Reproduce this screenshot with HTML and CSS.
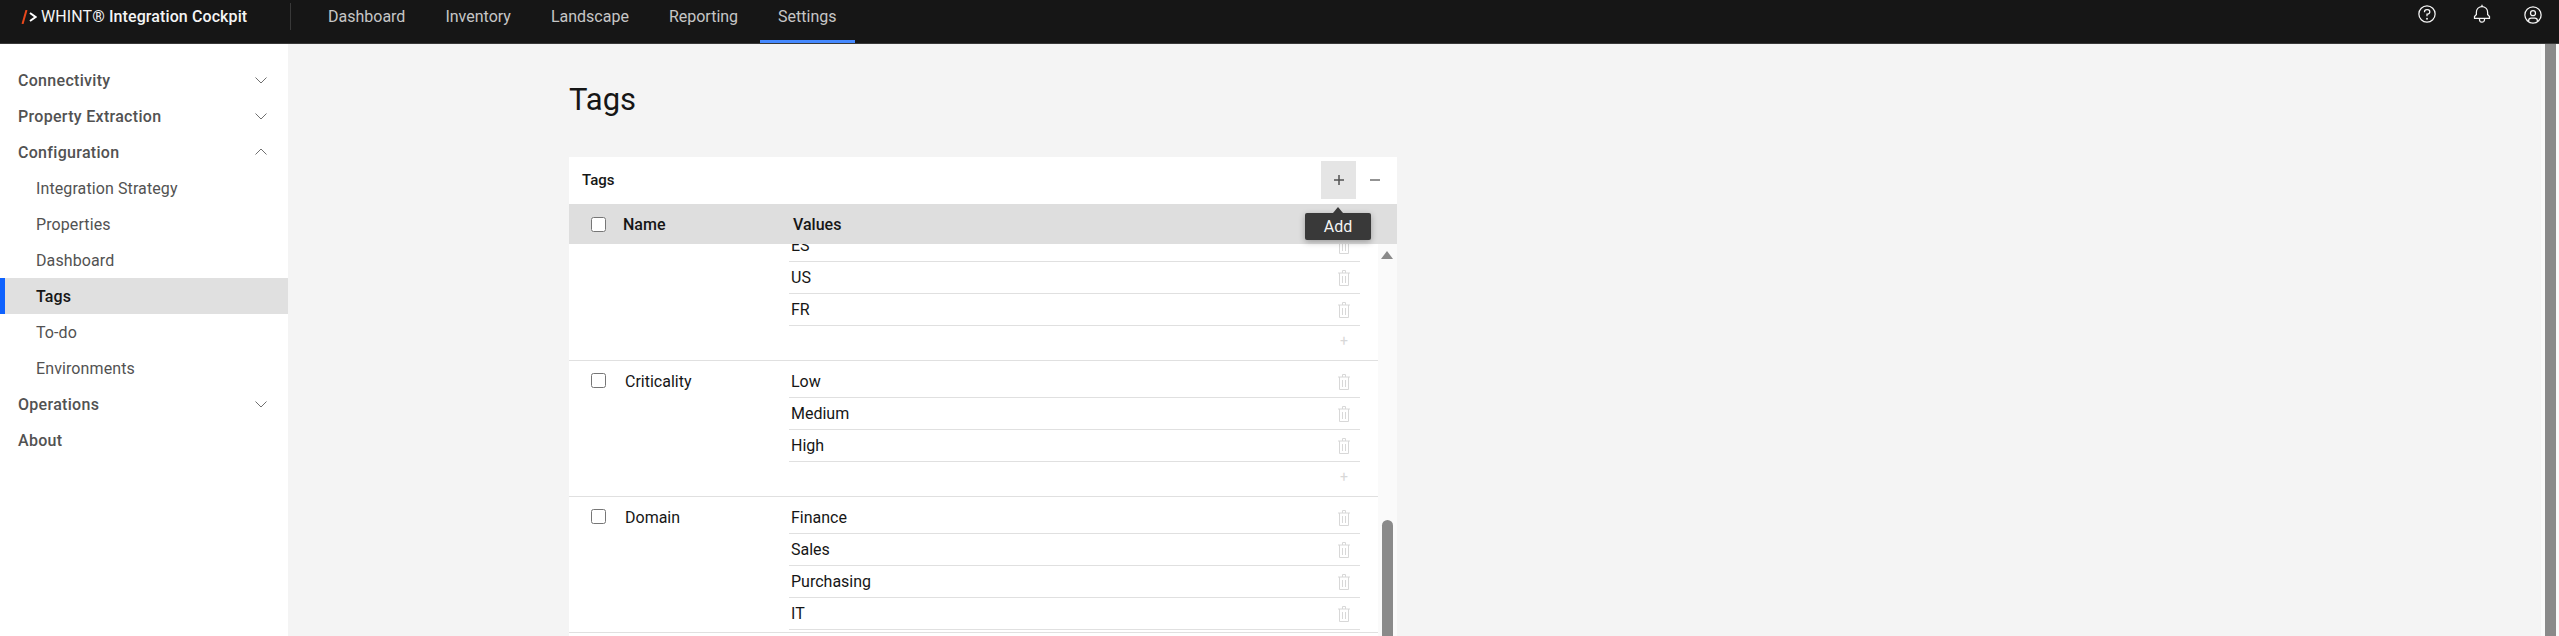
FILE: index.html
```html
<!DOCTYPE html>
<html lang="en">
<head>
    <meta charset="UTF-8">
    <meta name="viewport" content="width=device-width, initial-scale=1.0">
    <title>Tags</title>
    <link rel="stylesheet" href="styles.css">
</head>
<body>
    <svg class="sprites" width="0" height="0">
        <symbol id="trash" viewBox="0 0 12 16">
            <path d="M0 3h12M4.500 3V.5h3V3M1.500 3v12.500h9V3M4.500 6v7M7.500 6v7" fill="none" stroke="currentColor"/>
        </symbol>
        <symbol id="chevron" viewBox="0 0 12 12">
            <path d="M.5 3.500 6 9l5.500-5.500" fill="none" stroke="currentColor"/>
        </symbol>
    </svg>

    <header class="topbar">
        <div class="brand">
            <svg class="brand-logo" viewBox="0 0 16 14">
                <path d="M5.500 0 1.500 14" fill="none" stroke="#e8481c" stroke-width="2"/>
                <path d="M9 3l5.500 4L9 11" fill="none" stroke="#fff" stroke-width="2"/>
            </svg>
            <span class="brand-name">WHINT® <b>Integration Cockpit</b></span>
        </div>
        <nav class="tabs">
            <a class="tab">Dashboard</a>
            <a class="tab">Inventory</a>
            <a class="tab">Landscape</a>
            <a class="tab">Reporting</a>
            <a class="tab active">Settings</a>
        </nav>
        <div class="top-icons">
            <svg class="top-icon" viewBox="0 0 32 32" fill="currentColor">
                <path d="M16,2A14,14,0,1,0,30,16,14,14,0,0,0,16,2Zm0,26A12,12,0,1,1,28,16,12,12,0,0,1,16,28Z"/>
                <circle cx="16" cy="23.500" r="1.500"/>
                <path d="M17,8H15.500A4.490,4.490,0,0,0,11,12.500V13h2v-.5A2.500,2.500,0,0,1,15.500,10H17a2.500,2.500,0,0,1,0,5H15v4.500h2V17a4.500,4.500,0,0,0,0-9Z"/>
            </svg>
            <svg class="top-icon bell" viewBox="0 0 32 32" fill="currentColor">
                <path d="M28.7071,19.293,26,16.5859V13a10.0136,10.0136,0,0,0-9-9.9492V1H15V3.0508A10.0136,10.0136,0,0,0,6,13v3.5859L3.2929,19.293A1,1,0,0,0,3,20v3a1,1,0,0,0,1,1h7v.7768a5.152,5.152,0,0,0,4.500,5.1987A5.0057,5.0057,0,0,0,21,25V24h7a1,1,0,0,0,1-1V20A1,1,0,0,0,28.7071,19.293ZM19,25a3,3,0,0,1-6,0V24h6Zm8-3H5V20.4141L7.707,17.707A1,1,0,0,0,8,17V13a8,8,0,0,1,16,0v4a1,1,0,0,0,.293.707L27,20.4141Z"/>
            </svg>
            <svg class="top-icon user" viewBox="0 0 32 32" fill="currentColor">
                <path d="M16,8a5,5,0,1,0,5,5A5,5,0,0,0,16,8Zm0,8a3,3,0,1,1,3-3A3.0034,3.0034,0,0,1,16,16Z"/>
                <path d="M16,2A14,14,0,1,0,30,16,14.0158,14.0158,0,0,0,16,2ZM10,26.3765V25a3.0033,3.0033,0,0,1,3-3h6a3.0033,3.0033,0,0,1,3,3v1.3765a11.8989,11.8989,0,0,1-12,0Zm13.9925-1.4507A5.0016,5.0016,0,0,0,19,20H13a5.0016,5.0016,0,0,0-4.9925,4.9258,12,12,0,1,1,15.985,0Z"/>
            </svg>
        </div>
    </header>

    <div class="layout">
        <aside class="sidebar">
            <a class="side-item parent">Connectivity <svg class="chevron"><use href="#chevron"/></svg></a>
            <a class="side-item parent">Property Extraction <svg class="chevron"><use href="#chevron"/></svg></a>
            <a class="side-item parent">Configuration <svg class="chevron open"><use href="#chevron"/></svg></a>
            <a class="side-item child">Integration Strategy</a>
            <a class="side-item child">Properties</a>
            <a class="side-item child">Dashboard</a>
            <a class="side-item child current">Tags</a>
            <a class="side-item child">To-do</a>
            <a class="side-item child">Environments</a>
            <a class="side-item parent">Operations <svg class="chevron"><use href="#chevron"/></svg></a>
            <a class="side-item parent">About</a>
        </aside>

        <main class="content">
            <h1 class="page-title">Tags</h1>
            <section class="card">
                <div class="card-head">
                    <span class="card-title">Tags</span>
                    <button class="tool-btn hovered">
                        <svg class="tool-icon" viewBox="0 0 10 10"><path d="M0 5h10M5 0v10" stroke="currentColor" stroke-width="1.500"/></svg>
                        <span class="tooltip">Add</span>
                    </button>
                    <button class="tool-btn">
                        <svg class="tool-icon" viewBox="0 0 10 10"><path d="M0 5h10" stroke="currentColor" stroke-width="1.500"/></svg>
                    </button>
                </div>
                <div class="thead">
                    <input type="checkbox" class="check">
                    <span class="th-name">Name</span>
                    <span class="th-values">Values</span>
                </div>
                <div class="tbody">
                    <div class="groups">
                        <div class="group">
                            <div class="group-name"></div>
                            <div class="values">
                                <div class="value">ES <svg class="trash"><use href="#trash"/></svg></div>
                                <div class="value">US <svg class="trash"><use href="#trash"/></svg></div>
                                <div class="value">FR <svg class="trash"><use href="#trash"/></svg></div>
                                <div class="value-add">+</div>
                            </div>
                        </div>
                        <div class="group">
                            <div class="group-name"><input type="checkbox" class="check"><span>Criticality</span></div>
                            <div class="values">
                                <div class="value">Low <svg class="trash"><use href="#trash"/></svg></div>
                                <div class="value">Medium <svg class="trash"><use href="#trash"/></svg></div>
                                <div class="value">High <svg class="trash"><use href="#trash"/></svg></div>
                                <div class="value-add">+</div>
                            </div>
                        </div>
                        <div class="group">
                            <div class="group-name"><input type="checkbox" class="check"><span>Domain</span></div>
                            <div class="values">
                                <div class="value">Finance <svg class="trash"><use href="#trash"/></svg></div>
                                <div class="value">Sales <svg class="trash"><use href="#trash"/></svg></div>
                                <div class="value">Purchasing <svg class="trash"><use href="#trash"/></svg></div>
                                <div class="value">IT <svg class="trash"><use href="#trash"/></svg></div>
                            </div>
                        </div>
                    </div>
                    <div class="inner-scroll">
                        <span class="scroll-arrow"></span>
                        <span class="scroll-thumb"></span>
                    </div>
                </div>
            </section>
        </main>

        <div class="page-scroll"><span class="page-thumb"></span></div>
    </div>
</body>
</html>
```

FILE: styles.css
```css
* {
    box-sizing: border-box;
}
html, body {
    height: 100%;
}
body {
    margin: 0;
    font-family: Roboto, "Open Sans", Arial, sans-serif;
    font-size: 16px;
    color: #161616;
    background: #f4f4f4;
    overflow: hidden;
    display: flex;
    flex-direction: column;
}
.sprites {
    position: absolute;
}

/* top bar */
.topbar {
    flex: none;
    height: 44px;
    background: #161616;
    border-bottom: 1px solid #393939;
    display: flex;
    color: #c6c6c6;
}
.brand {
    width: 291px;
    height: 43px;
    padding: 0 0 10px 21px;
    display: flex;
    align-items: center;
    gap: 4px;
    color: #f4f4f4;
    position: relative;
}
.brand::after {
    content: '';
    position: absolute;
    right: 0;
    top: 3px;
    height: 27px;
    width: 1px;
    background: #393939;
}
.brand-logo {
    width: 16px;
    height: 14px;
    flex: none;
}
.brand-name {
    font-size: 16px;
    letter-spacing: 0.1px;
}
.brand-name b {
    font-weight: 500;
}
.tabs {
    display: flex;
    gap: 4px;
    margin-left: 19px;
}
.tab {
    padding: 0 18px;
    height: 43px;
    line-height: 33px;
    border-bottom: 3px solid transparent;
}
.tab.active {
    border-bottom-color: #4589ff;
}
.top-icons {
    margin-left: auto;
    display: flex;
    gap: 35px;
    padding: 4px 16px 0 0;
    color: #f4f4f4;
}
.top-icon {
    width: 20px;
    height: 20px;
}
.bell {
    margin-right: -4px;
}
.user {
    margin-top: 1px;
}

/* sidebar */
.layout {
    flex: 1;
    display: flex;
    min-height: 0;
}
.sidebar {
    width: 288px;
    flex: none;
    background: #fff;
    padding-top: 18px;
    color: #525252;
}
.side-item {
    height: 36px;
    display: flex;
    align-items: center;
    justify-content: space-between;
}
.parent {
    padding: 0 21px 0 18px;
    font-weight: 500;
    letter-spacing: 0.3px;
}
.child {
    padding-left: 36px;
    letter-spacing: 0.1px;
}
.current {
    background: #e0e0e0;
    color: #161616;
    font-weight: 500;
    border-left: 5px solid #0f62fe;
    padding-left: 31px;
}
.chevron {
    width: 12px;
    height: 12px;
    color: #6f6f6f;
}
.chevron.open {
    transform: rotate(180deg);
}

/* main area */
.content {
    flex: 1;
    min-width: 0;
    padding-left: 281px;
}
.page-title {
    margin: 0;
    height: 113px;
    padding-top: 36px;
    font-size: 31px;
    line-height: 40px;
    font-weight: 400;
}
.card {
    width: 828px;
    background: #fff;
    height: 479px;
    display: flex;
    flex-direction: column;
}
.card-head {
    flex: none;
    height: 47px;
    padding: 4px 5px 5px 13px;
    display: flex;
    align-items: center;
}
.card-title {
    flex: 1;
    font-size: 15px;
    font-weight: 500;
}
.tool-btn {
    width: 35px;
    height: 38px;
    padding: 0;
    border: none;
    background: none;
    color: #6f6f6f;
    font-family: inherit;
    position: relative;
    display: flex;
    align-items: center;
    justify-content: center;
}
.tool-btn.hovered {
    background: #e5e5e5;
    color: #525252;
    margin-right: 1px;
}
.tool-icon {
    width: 10px;
    height: 10px;
}
.tooltip {
    position: absolute;
    z-index: 2;
    left: -16px;
    top: 52px;
    width: 66px;
    height: 27px;
    border-radius: 2px;
    background: #393939;
    color: #f4f4f4;
    font-size: 16px;
    line-height: 27px;
    box-shadow: 0 2px 6px rgba(0, 0, 0, 0.3);
}
.tooltip::before {
    content: '';
    position: absolute;
    left: 28px;
    top: -6px;
    border-left: 5px solid transparent;
    border-right: 5px solid transparent;
    border-bottom: 6px solid #393939;
}
.thead {
    flex: none;
    height: 40px;
    background: #dedede;
    display: flex;
    align-items: center;
    padding-left: 22px;
    font-weight: 500;
    position: relative;
    z-index: 1;
}
.th-name {
    margin-left: 17px;
    width: 170px;
}
.check {
    width: 15px;
    height: 15px;
    margin: 0;
    flex: none;
}
.tbody {
    flex: 1;
    min-height: 0;
    display: flex;
    overflow: hidden;
}
.groups {
    flex: 1;
    margin-top: -19px;
}
.group {
    height: 136px;
    padding-top: 5px;
    border-bottom: 1px solid #e0e0e0;
    display: flex;
}
.group-name {
    width: 220px;
    padding: 7px 0 0 22px;
    display: flex;
    align-items: flex-start;
    gap: 19px;
}
.group-name span {
    margin-top: -1px;
}
.values {
    width: 571px;
}
.value {
    height: 32px;
    border-bottom: 1px solid #e0e0e0;
    padding: 0 10px 0 2px;
    display: flex;
    align-items: center;
    justify-content: space-between;
}
.value-add {
    height: 32px;
    line-height: 30px;
    text-align: right;
    padding-right: 12px;
    font-size: 14px;
    color: #d8d8d8;
}
.trash {
    width: 12px;
    height: 16px;
    color: #d8d8d8;
}
.inner-scroll {
    width: 19px;
    flex: none;
    background: #fafafa;
    position: relative;
}
.scroll-arrow {
    position: absolute;
    left: 3px;
    top: 7px;
    border-left: 6.5px solid transparent;
    border-right: 6.5px solid transparent;
    border-bottom: 8px solid #8a8a8a;
}
.scroll-thumb {
    position: absolute;
    left: 4px;
    top: 276px;
    bottom: 0;
    width: 11px;
    border-radius: 6px 6px 0 0;
    background: #8a8a8a;
}

/* page scrollbar */
.page-scroll {
    width: 18px;
    flex: none;
    background: #fafafa;
    padding-left: 4px;
}
.page-thumb {
    display: block;
    width: 11px;
    height: 100%;
    background: #8a8a8a;
}
```
